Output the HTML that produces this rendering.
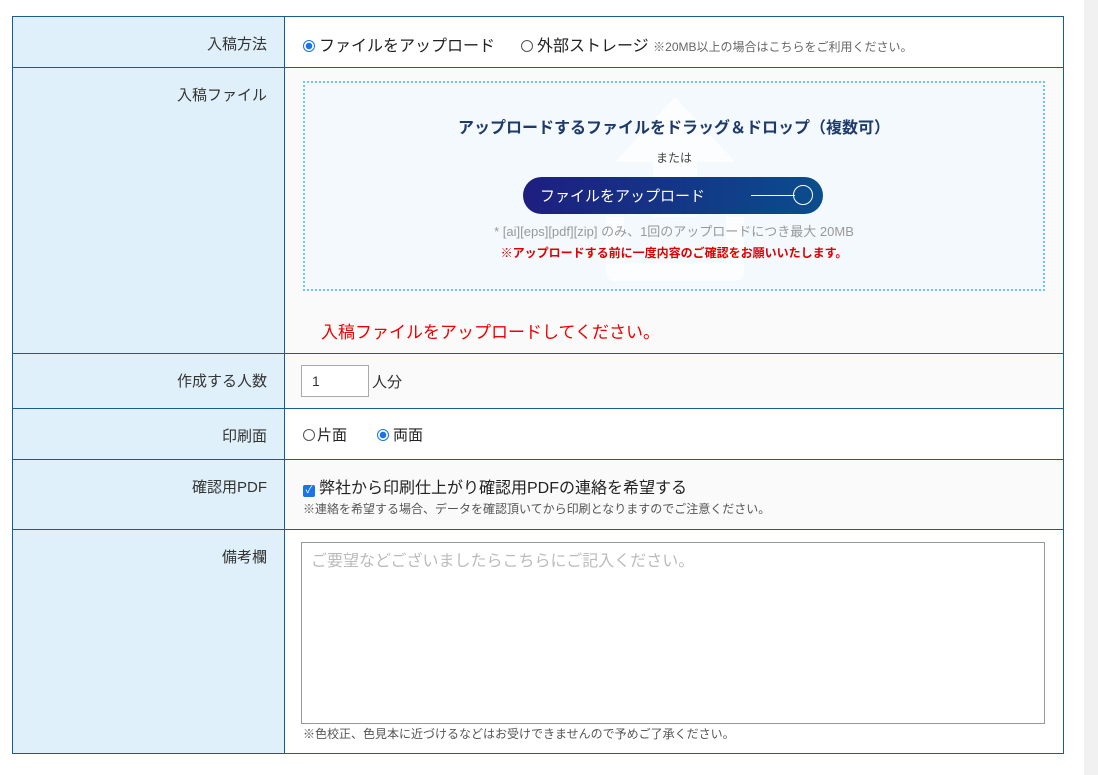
<!DOCTYPE html>
<html><head><meta charset="utf-8"><style>
*{box-sizing:border-box;margin:0;padding:0}
body{width:1098px;height:775px;background:#fff;font-family:"Liberation Sans","Noto Sans CJK JP",sans-serif;color:#333;position:relative;overflow:hidden}
.sb{position:absolute;left:1084px;top:0;width:14px;height:775px;background:#f1f1f1}
.t{position:absolute;left:13px;top:17px;width:1050px;height:736px}
.frame{position:absolute;left:12px;top:16px;width:1052px;height:738px;border:1px solid #1a5a96;z-index:5;pointer-events:none}
.row{position:absolute;left:0;width:1050px;border-top:1px solid #1a5a96}
.lab{position:absolute;left:0;top:0;bottom:0;width:272px;background:#dff0fa;border-right:1px solid #1a5a96;text-align:right;padding-right:17px;font-size:15px;color:#333}
.c{position:absolute;left:272px;top:0;right:0;bottom:0}
.a{position:absolute;white-space:nowrap}
.rad{display:inline-block;width:12px;height:12px;border:1px solid #555;border-radius:50%;vertical-align:-1px;margin-right:4px;background:#fff}
.rad.on{border:1px solid #1a73e8;background:radial-gradient(circle,#1a73e8 3px,#fff 3.5px)}
</style></head><body>
<div class="sb"></div>
<div class="frame"></div>
<div class="t">
 <div class="row" style="top:0;height:51px;border-top:none">
  <div class="lab" style="padding-top:16px">入稿方法</div>
  <div class="c" style="background:#fff">
   <div class="a" style="left:18px;top:15px;font-size:16px;color:#222"><span class="rad on"></span>ファイルをアップロード</div>
   <div class="a" style="left:236px;top:15px;font-size:16px;color:#222"><span class="rad"></span>外部ストレージ <span style="font-size:12px;color:#666">※20MB以上の場合はこちらをご利用ください。</span></div>
  </div>
 </div>
 <div class="row" style="top:50px;height:287px">
  <div class="lab" style="padding-top:16px">入稿ファイル</div>
  <div class="c" style="background:#fafafa">
   <div class="a" style="left:18px;top:13px;width:742px;height:210px;border:2px dotted #6ec6ec;background:#f3f9fd;overflow:hidden">
    <svg class="a" style="left:280px;top:14px" width="180" height="190" viewBox="0 0 180 190" opacity="0.8"><path d="M90 0 L150 65 L112 65 L112 120 L68 120 L68 65 L30 65 Z" fill="#fff"/><path d="M30 120 L30 175 L150 175 L150 120" stroke="#fff" stroke-width="18" fill="none" stroke-linejoin="round"/></svg>
    <div class="a" style="left:0;width:738px;top:31px;text-align:center;font-size:16px;font-weight:bold;color:#1e3a6a">アップロードするファイルをドラッグ＆ドロップ（複数可）</div>
    <div class="a" style="left:0;width:738px;top:66px;text-align:center;font-size:12px;color:#444">または</div>
    <div class="a" style="left:218px;top:94px;width:300px;height:37px;border-radius:19px;background:linear-gradient(90deg,#1e1e80,#0a4d8c);color:#fff;font-size:15px;padding:8px 0 0 17px">ファイルをアップロード
     <div class="a" style="left:228px;top:18px;width:44px;height:1px;background:#fff"></div>
     <div class="a" style="left:270px;top:8px;width:20px;height:20px;border:1.5px solid #fff;border-radius:50%"></div>
    </div>
    <div class="a" style="left:0;width:738px;top:138px;text-align:center;font-size:13px;color:#999">* [ai][eps][pdf][zip] のみ、1回のアップロードにつき最大 20MB</div>
    <div class="a" style="left:0;width:738px;top:161px;text-align:center;font-size:12px;font-weight:bold;color:#d00">※アップロードする前に一度内容のご確認をお願いいたします。</div>
   </div>
   <div class="a" style="left:36px;top:250px;font-size:17px;color:#e00">入稿ファイルをアップロードしてください。</div>
  </div>
 </div>
 <div class="row" style="top:336px;height:56px">
  <div class="lab" style="padding-top:16px">作成する人数</div>
  <div class="c" style="background:#fafafa">
   <div class="a" style="left:16px;top:11px;width:68px;height:32px;border:1px solid #aaa;background:#fff;font-size:14px;padding:7px 0 0 10px">1</div>
   <div class="a" style="left:87px;top:17px;font-size:15px">人分</div>
  </div>
 </div>
 <div class="row" style="top:391px;height:52px">
  <div class="lab" style="padding-top:16px">印刷面</div>
  <div class="c" style="background:#fff">
   <div class="a" style="left:18px;top:15px;font-size:15px;color:#222"><span class="rad" style="margin-right:2px"></span>片面</div>
   <div class="a" style="left:92px;top:15px;font-size:15px;color:#222"><span class="rad on" style="margin-right:4px"></span>両面</div>
  </div>
 </div>
 <div class="row" style="top:442px;height:71px">
  <div class="lab" style="padding-top:16px">確認用PDF</div>
  <div class="c" style="background:#fafafa">
   <div class="a" style="left:18px;top:14px;font-size:16px;color:#222"><span style="display:inline-block;width:12px;height:12px;background:#1a73e8;border-radius:2px;color:#fff;font-size:10px;line-height:12px;text-align:center;vertical-align:0;margin-right:4px">✓</span>弊社から印刷仕上がり確認用PDFの連絡を希望する</div>
   <div class="a" style="left:18px;top:40px;font-size:12px;color:#555">※連絡を希望する場合、データを確認頂いてから印刷となりますのでご注意ください。</div>
  </div>
 </div>
 <div class="row" style="top:512px;height:224px">
  <div class="lab" style="padding-top:16px">備考欄</div>
  <div class="c" style="background:#fff">
   <div class="a" style="left:16px;top:12px;width:744px;height:182px;border:1px solid #999;font-size:16px;color:#bbb;padding:4px 9px">ご要望などございましたらこちらにご記入ください。</div>
   <div class="a" style="left:18px;top:195px;font-size:12px;color:#555">※色校正、色見本に近づけるなどはお受けできませんので予めご了承ください。</div>
  </div>
 </div>
</div>
</body></html>
